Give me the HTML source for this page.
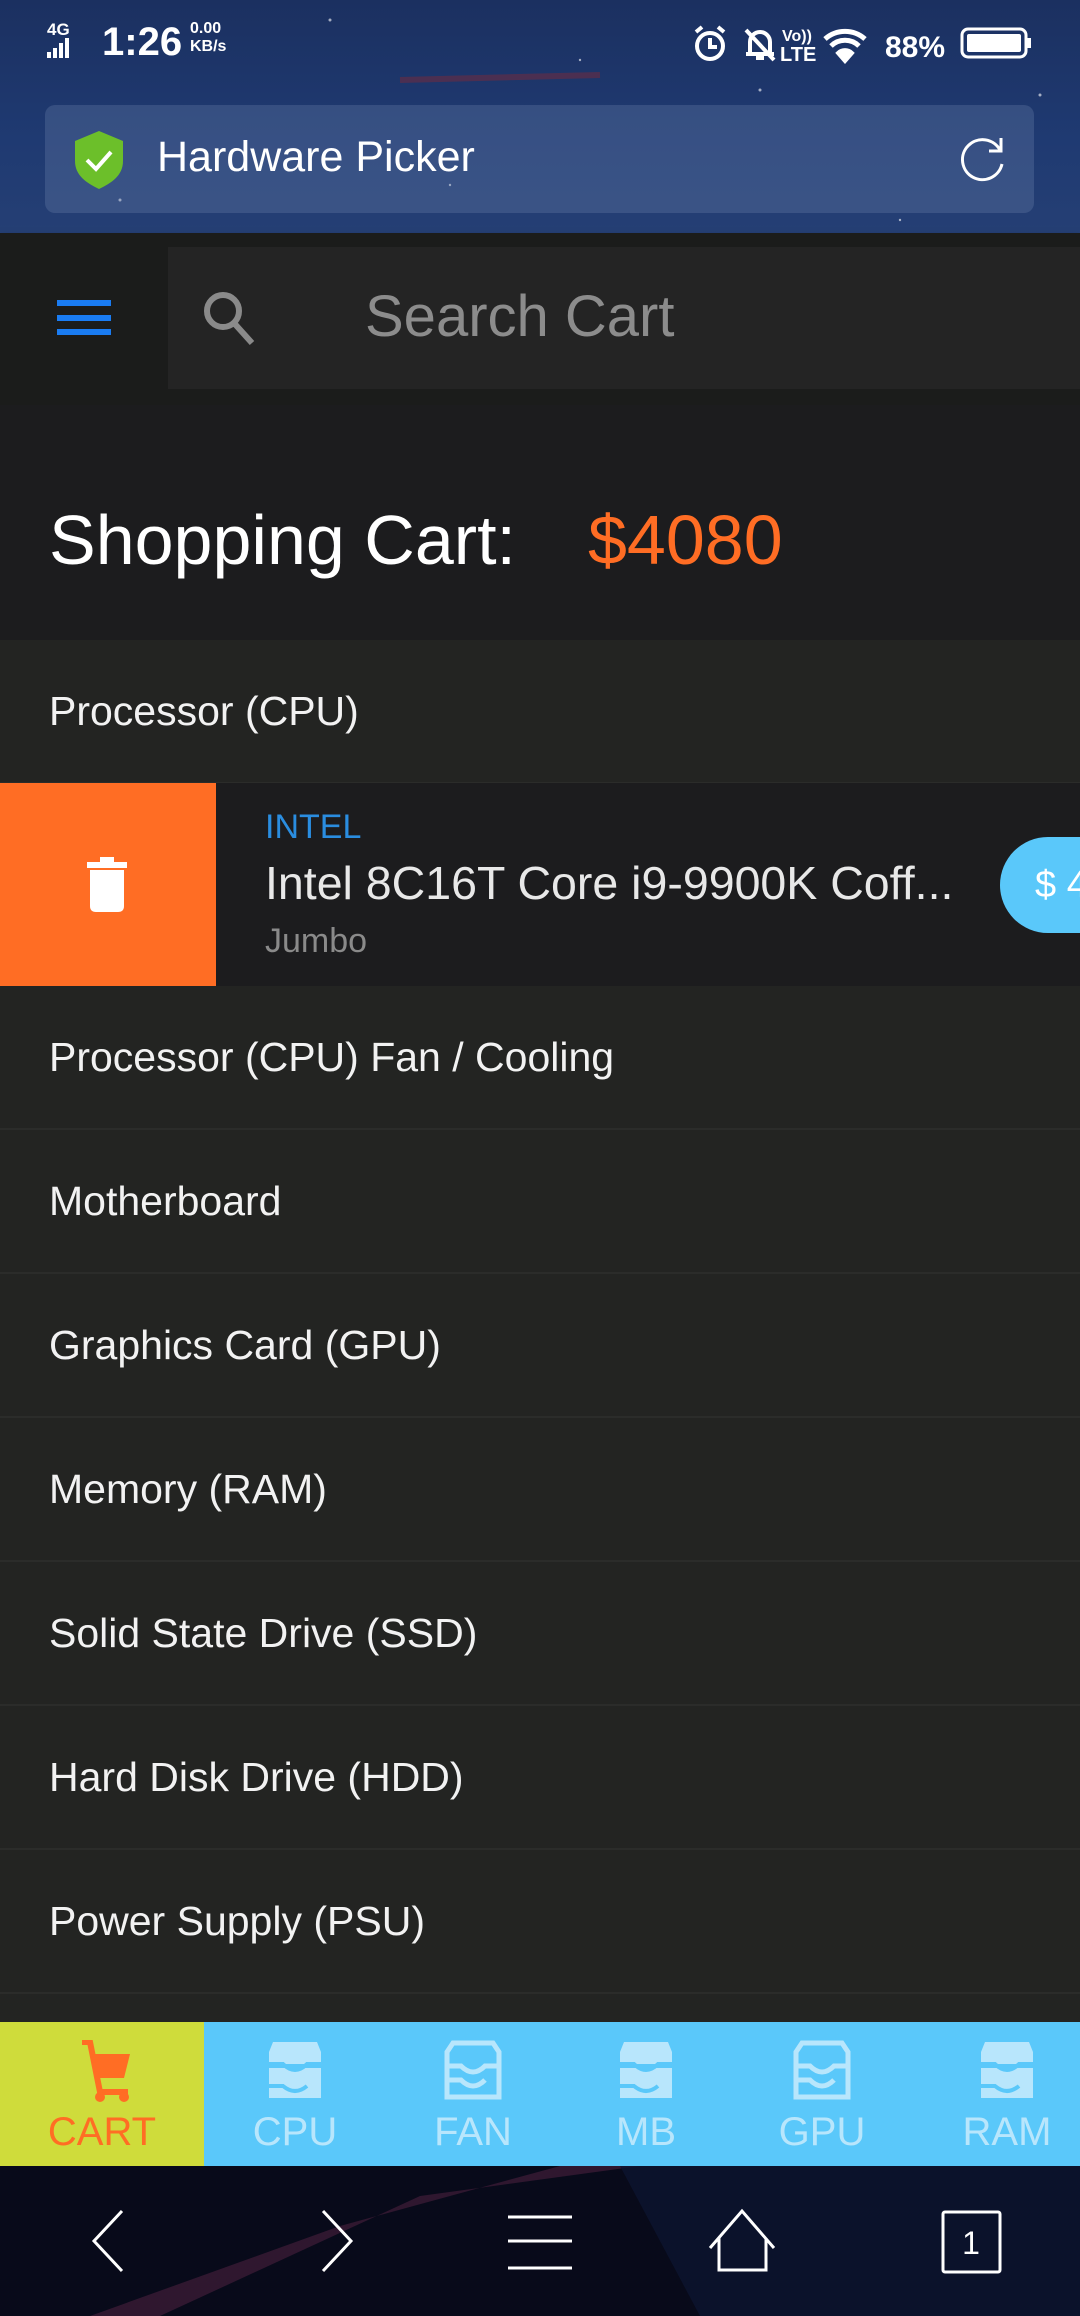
<!DOCTYPE html>
<html><head><meta charset="utf-8">
<style>
*{margin:0;padding:0;box-sizing:border-box}
body{width:1080px;height:2316px;overflow:hidden;background:#232422;font-family:"Liberation Sans",sans-serif;position:relative}
.abs{position:absolute}
.top{left:0;top:0;width:1080px;height:233px;background:linear-gradient(180deg,#1b3060 0%,#1f3a72 60%,#253f74 100%)}
.url{left:45px;top:105px;width:989px;height:108px;background:rgba(120,140,180,0.28);border-radius:10px}
.appbar{left:0;top:233px;width:1080px;height:172px;background:#1b1c1b;box-shadow:0 6px 8px rgba(0,0,0,.6)}
.search{left:168px;top:247px;width:912px;height:142px;background:#242424}
.cart{left:0;top:405px;width:1080px;height:235px;background:#1c1c1e}
.row{left:0;width:1080px;height:144px;background:#232422;border-bottom:2px solid #2b2c2a;color:#f2f2f2;font-size:41px;padding-left:49px;line-height:142px}
.tab{top:2022px;height:144px;text-align:center;color:#b8e6fc;font-size:40px}
.tab svg{position:absolute;left:50%;margin-left:-30px;top:18px}
.tab span{position:absolute;left:0;right:0;top:88px}
</style></head><body>
<div class="abs top"></div>
<svg class="abs" style="left:0;top:0" width="1080" height="233">
<g fill="#fff" opacity=".6"><circle cx="120" cy="200" r="1.5"/><circle cx="330" cy="20" r="1.5"/><circle cx="580" cy="60" r="1.2"/><circle cx="760" cy="90" r="1.5"/><circle cx="900" cy="220" r="1.2"/><circle cx="1040" cy="95" r="1.5"/><circle cx="450" cy="185" r="1.2"/></g>
<path d="M400 80 L600 75" stroke="#7a2a3a" stroke-width="6" opacity=".5"/>
</svg>
<div class="abs" style="left:47px;top:20px;color:#fff;font-size:17px;font-weight:bold">4G</div>
<svg class="abs" style="left:47px;top:38px" width="24" height="20"><rect x="0" y="14" width="4" height="6" fill="#fff"/><rect x="6" y="10" width="4" height="10" fill="#fff"/><rect x="12" y="5" width="4" height="15" fill="#fff"/><rect x="18" y="0" width="4" height="20" fill="#fff"/></svg>
<div class="abs" style="left:102px;top:20px;color:#fff;font-size:40px;font-weight:bold">1:26</div>
<div class="abs" style="left:190px;top:20px;color:#fff;font-size:16px;font-weight:bold;line-height:18px">0.00<br>KB/s</div>
<svg class="abs" style="left:690px;top:24px" width="350" height="40" fill="none" stroke="#fff" stroke-width="4">
<circle cx="20" cy="22" r="13"/><path d="M20 14v9h7M6 8l6-5M34 8l-6-5"/>
<path d="M60 30V18a10 10 0 0 1 20 0v12h4H56M66 34h8M56 6l28 30"/>
<text x="92" y="17" fill="#fff" stroke="none" font-size="16" font-weight="bold" font-family="Liberation Sans">Vo))</text>
<text x="90" y="37" fill="#fff" stroke="none" font-size="20" font-weight="bold" font-family="Liberation Sans">LTE</text>
<path d="M135 15a30 30 0 0 1 40 0M141 22a20 20 0 0 1 28 0" stroke-width="5"/><path d="M148 29a10 10 0 0 1 14 0L155 37z" fill="#fff"/>
<text x="195" y="33" fill="#fff" stroke="none" font-size="30" font-weight="bold" font-family="Liberation Sans">88%</text>
<rect x="272" y="5" width="64" height="28" rx="6" stroke-width="3"/><rect x="277" y="10" width="54" height="18" rx="2" fill="#fff" stroke="none"/><rect x="337" y="14" width="4" height="10" fill="#fff" stroke="none"/>
</svg>
<div class="abs url"></div>
<svg class="abs" style="left:75px;top:131px" width="50" height="58"><path d="M24 0 L48 10 V30 C48 45 36 52 24 58 C12 52 0 45 0 30 V10 Z" fill="#6cbf2a"/><path d="M12 29 l9 9 l15 -17" stroke="#fff" stroke-width="4" fill="none"/></svg>
<div class="abs" style="left:157px;top:133px;color:#fff;font-size:43px">Hardware Picker</div>
<svg class="abs" style="left:958px;top:136px" width="50" height="48" fill="none" stroke="#fff" stroke-width="3"><path d="M42 14 A20 20 0 1 0 44 28"/><path d="M43 2 V15 H31"/></svg>
<div class="abs appbar"></div>
<div class="abs search"></div>
<svg class="abs" style="left:57px;top:298px" width="54" height="40"><rect y="2" width="54" height="6" fill="#1a7cf2"/><rect y="17" width="54" height="6" fill="#1a7cf2"/><rect y="31" width="54" height="6" fill="#1a7cf2"/></svg>
<svg class="abs" style="left:200px;top:288px" width="58" height="58" fill="none" stroke="#8a8a8a" stroke-width="6"><circle cx="23" cy="23" r="16"/><path d="M34 35 L52 55"/></svg>
<div class="abs" style="left:365px;top:283px;color:#8c8c8c;font-size:58px">Search Cart</div>
<div class="abs cart"></div>
<div class="abs" style="left:49px;top:500px;color:#fff;font-size:70px">Shopping Cart:</div>
<div class="abs" style="left:588px;top:500px;color:#ff6d24;font-size:70px">$4080</div>
<div class="abs row" style="top:640px">Processor (CPU)</div>
<div class="abs" style="left:0;top:783px;width:1080px;height:203px;background:#1c1c1e"></div>
<div class="abs" style="left:0;top:783px;width:216px;height:203px;background:#ff6d24"></div>
<svg class="abs" style="left:86px;top:856px" width="44" height="58"><rect x="1" y="6" width="40" height="6" fill="#fff"/><rect x="14" y="1" width="14" height="6" fill="#fff"/><path d="M4 14 H38 V50 Q38 56 32 56 H10 Q4 56 4 50 Z" fill="#fff"/></svg>
<div class="abs" style="left:265px;top:808px;color:#2a8de0;font-size:34px">INTEL</div>
<div class="abs" style="left:265px;top:856px;color:#e8e8e8;font-size:46.5px;white-space:nowrap">Intel 8C16T Core i9-9900K Coff...</div>
<div class="abs" style="left:265px;top:922px;color:#8a8a8a;font-size:34px">Jumbo</div>
<div class="abs" style="left:1000px;top:837px;width:140px;height:96px;background:#5ac8fa;border-radius:48px;color:#fff;font-size:38px;line-height:96px;padding-left:35px">$ 4</div>
<div class="abs row" style="top:986px">Processor (CPU) Fan / Cooling</div>
<div class="abs row" style="top:1130px">Motherboard</div>
<div class="abs row" style="top:1274px">Graphics Card (GPU)</div>
<div class="abs row" style="top:1418px">Memory (RAM)</div>
<div class="abs row" style="top:1562px">Solid State Drive (SSD)</div>
<div class="abs row" style="top:1706px">Hard Disk Drive (HDD)</div>
<div class="abs row" style="top:1850px">Power Supply (PSU)</div>
<div class="abs" style="left:0;top:2022px;width:1080px;height:144px;background:#5ac8fa"></div>
<div class="abs tab" style="left:0;width:204px;background:#cfdc3b;color:#ff6d24">
<svg width="60" height="62"><path d="M10 2 H18 L28 52 H56" stroke="#ff6d24" stroke-width="6" fill="none"/><path d="M20 14 H58 L52 38 H24 Z" fill="#ff6d24"/><circle cx="28" cy="57" r="5" fill="#ff6d24"/><circle cx="52" cy="57" r="5" fill="#ff6d24"/></svg>
<span>CART</span></div>
<div class="abs tab" style="left:245px;width:100px"><svg width="60" height="62"><path d="M8 2 H52 L56 12 V24 H4 V12 Z M4 28 H56 V58 H4 Z" fill="#b8e6fc"/><path d="M4 24 H18 Q30 36 42 24 H56" fill="none" stroke="#5ac8fa" stroke-width="4"/><path d="M4 46 H18 Q30 56 42 46" fill="none" stroke="#5ac8fa" stroke-width="4"/></svg><span>CPU</span></div>
<div class="abs tab" style="left:423px;width:100px"><svg width="60" height="62" fill="none" stroke="#b8e6fc" stroke-width="5"><path d="M10 3 H50 L56 12 V57 H4 V12 Z M4 26 H18 Q30 38 42 26 H56 M4 40 H18 Q30 52 42 40"/></svg><span>FAN</span></div>
<div class="abs tab" style="left:596px;width:100px"><svg width="60" height="62"><path d="M8 2 H52 L56 12 V24 H4 V12 Z M4 28 H56 V58 H4 Z" fill="#b8e6fc"/><path d="M4 24 H18 Q30 36 42 24 H56" fill="none" stroke="#5ac8fa" stroke-width="4"/><path d="M4 46 H18 Q30 56 42 46" fill="none" stroke="#5ac8fa" stroke-width="4"/></svg><span>MB</span></div>
<div class="abs tab" style="left:772px;width:100px"><svg width="60" height="62" fill="none" stroke="#b8e6fc" stroke-width="5"><path d="M10 3 H50 L56 12 V57 H4 V12 Z M4 26 H18 Q30 38 42 26 H56 M4 40 H18 Q30 52 42 40"/></svg><span>GPU</span></div>
<div class="abs tab" style="left:957px;width:100px"><svg width="60" height="62"><path d="M8 2 H52 L56 12 V24 H4 V12 Z M4 28 H56 V58 H4 Z" fill="#b8e6fc"/><path d="M4 24 H18 Q30 36 42 24 H56" fill="none" stroke="#5ac8fa" stroke-width="4"/><path d="M4 46 H18 Q30 56 42 46" fill="none" stroke="#5ac8fa" stroke-width="4"/></svg><span>RAM</span></div>
<svg class="abs" style="left:0;top:2166px" width="1080" height="150">
<rect width="1080" height="150" fill="#080a1a"/>
<path d="M160 150 L420 30 L640 0 L560 0 L340 60 L90 150Z" fill="#3a1a34" opacity=".8"/>
<path d="M620 0 L1080 0 L1080 150 L700 150 Z" fill="#0c1430" opacity=".8"/>
<g fill="none" stroke="#fff" stroke-width="3">
<path d="M122 45 L94 75 L122 105"/>
<path d="M323 45 L351 75 L323 105"/>
<path d="M508 51 H572 M508 75 H572 M508 102 H572"/>
<path d="M710 82 L742 45 L774 82 M719 72 V104 H766 V72"/>
<rect x="943" y="46" width="57" height="60" rx="2"/>
</g>
<text x="971" y="88" fill="#fff" font-size="32" text-anchor="middle" font-family="Liberation Sans">1</text>
</svg>
</body></html>
